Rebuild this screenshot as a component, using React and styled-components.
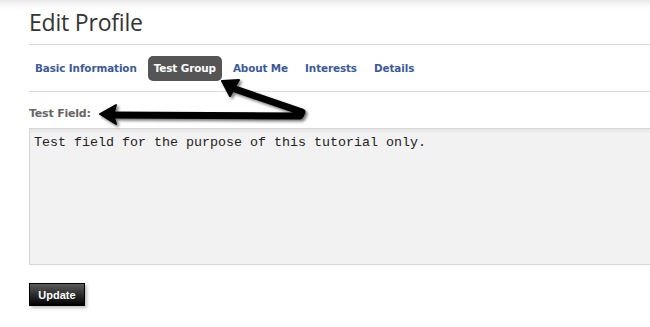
import React from "react";
import styled, { createGlobalStyle } from "styled-components";

const Global = createGlobalStyle`
  html, body { margin: 0; padding: 0; background: #fff; overflow: hidden; }
  body { font-family: "DejaVu Sans", Verdana, sans-serif; }
`;

const Page = styled.div`
  position: relative;
  width: 650px;
  height: 327px;
  overflow: hidden;
  padding-left: 29px;
  box-sizing: border-box;
  background: linear-gradient(#e6e6e6 0px, #f6f6f6 4px, #ffffff 10px) top left / 100% 12px no-repeat, #fff;
`;

const Title = styled.h1`
  margin: 0;
  height: 45px;
  box-sizing: border-box;
  padding-top: 7px;
  border-bottom: 1px solid #dcdcdc;
  font-family: "Open Sans", "Noto Sans", sans-serif;
  font-weight: 400;
  font-size: 23px;
  line-height: 30px;
  color: #333;
  letter-spacing: -0.2px;
`;

const Tabs = styled.nav`
  display: flex;
  align-items: center;
  gap: 5px;
  height: 46px;
  border-bottom: 1px solid #dcdcdc;
`;

const Tab = styled.a`
  display: inline-flex;
  align-items: center;
  height: 25px;
  padding: 0 6px;
  border-radius: 5px;
  font-family: "DejaVu Sans", Verdana, sans-serif;
  font-weight: 700;
  font-size: 10.4px;
  letter-spacing: -0.1px;
  color: ${(p) => (p.$active ? "#fff" : "#3b5998")};
  background: ${(p) => (p.$active ? "#555" : "transparent")};
  text-decoration: none;
`;

const Label = styled.label`
  display: block;
  margin-top: 15px;
  font-family: "DejaVu Sans", Verdana, sans-serif;
  font-weight: 700;
  font-size: 11px;
  letter-spacing: -0.2px;
  color: #666;
  line-height: 14px;
`;

const Field = styled.div`
  margin-top: 7px;
  width: 660px;
  height: 137px;
  box-sizing: border-box;
  border: 1px solid #d6d6d6;
  border-right: none;
  background: #f2f2f2;
  box-shadow: inset 0 4px 4px -2px rgba(0, 0, 0, 0.06);
  padding: 6px 4px;
  font-family: "Liberation Mono", "Courier New", monospace;
  font-size: 13.33px;
  line-height: 15px;
  color: #222;
`;

const Button = styled.button`
  display: block;
  margin-top: 18px;
  width: 56px;
  height: 23px;
  box-sizing: border-box;
  border: 1px solid #000;
  background: linear-gradient(#5a5a5a, #1c1c1c 70%, #000);
  box-shadow: 2px 2px 3px rgba(0, 0, 0, 0.25);
  color: #fff;
  font-family: "Liberation Sans", Arial, sans-serif;
  font-weight: 700;
  font-size: 11px;
  padding: 0;
`;

const Overlay = styled.svg`
  position: absolute;
  left: 0;
  top: 0;
  pointer-events: none;
`;

function Arrows() {
  return (
    <Overlay width="650" height="327" viewBox="0 0 650 327">
      <defs>
        <filter id="sh" x="-10%" y="-30%" width="130%" height="170%">
          <feGaussianBlur in="SourceAlpha" stdDeviation="1.6" />
          <feOffset dx="2" dy="2" result="b" />
          <feComponentTransfer>
            <feFuncA type="linear" slope="0.55" />
          </feComponentTransfer>
          <feMerge>
            <feMergeNode />
            <feMergeNode in="SourceGraphic" />
          </feMerge>
        </filter>
      </defs>
      <g filter="url(#sh)" fill="#000" stroke="#000">
        <polyline
          points="232,88 302,112 300,116 110,115"
          fill="none"
          strokeWidth="7"
          strokeLinejoin="round"
          strokeLinecap="round"
        />
        <polygon points="100,114 116,105 113,115 116,124" strokeWidth="2" strokeLinejoin="round" />
        <polygon points="222,81 239,80 234,88 230,96" strokeWidth="2" strokeLinejoin="round" />
      </g>
    </Overlay>
  );
}

export default function App() {
  return (
    <>
      <Global />
      <Page>
        <Title>Edit Profile</Title>
        <Tabs>
          <Tab>Basic Information</Tab>
          <Tab $active>Test Group</Tab>
          <Tab>About Me</Tab>
          <Tab>Interests</Tab>
          <Tab>Details</Tab>
        </Tabs>
        <Label>Test Field:</Label>
        <Field>Test field for the purpose of this tutorial only.</Field>
        <Button>Update</Button>
        <Arrows />
      </Page>
    </>
  );
}
